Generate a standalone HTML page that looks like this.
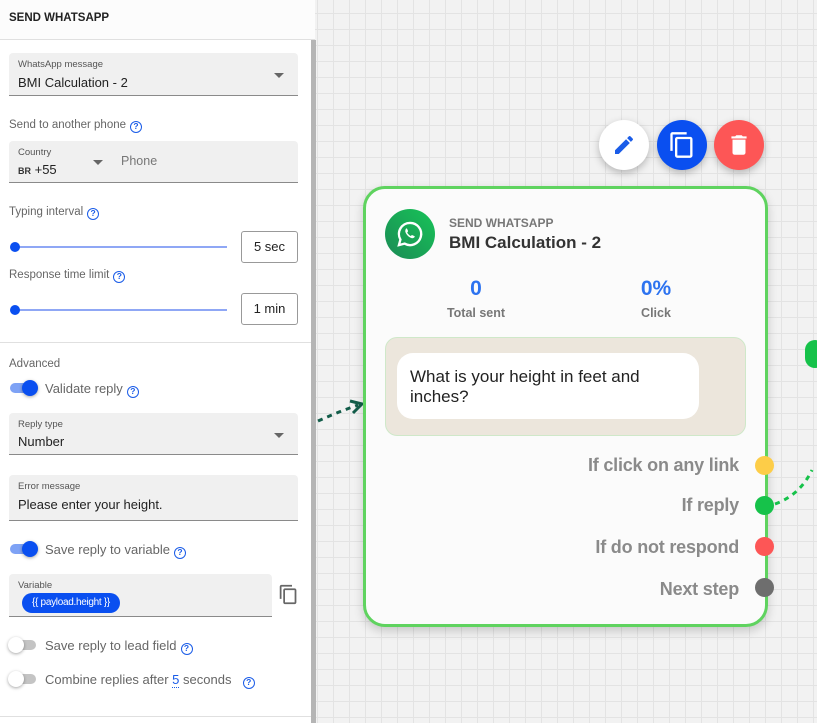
<!DOCTYPE html>
<html><head><style>
*{box-sizing:border-box;margin:0;padding:0}
body{width:817px;height:723px;overflow:hidden;font-family:"Liberation Sans",sans-serif;background:#f2f2f2;position:relative;color:#222}
.canvas{position:absolute;left:315px;top:0;right:0;bottom:0;background-color:#f2f2f2;background-image:linear-gradient(#e3e3e3 1px,transparent 1px),linear-gradient(90deg,#e3e3e3 1px,transparent 1px);background-size:16px 16px;background-position:2px 13px}
.side{position:absolute;left:0;top:0;width:315px;height:723px;background:#fff}
.hdr{height:40px;border-bottom:1px solid #e0e0e0;background:#fcfcfc;padding:12px 9px;font-size:11.5px;font-weight:bold;color:#222}
.sb{position:absolute;left:311px;top:40px;width:5px;height:683px;background:#b5b5b5}
.fld{position:absolute;left:9px;width:289px;background:#f0f0f0;border-bottom:1px solid #8a8a8a;border-radius:4px 4px 0 0}
.fld .l{position:absolute;left:9px;top:6px;font-size:9.5px;color:#555}
.fld .v{position:absolute;left:9px;font-size:13px;color:#222}
.arr{position:absolute;right:14px;width:0;height:0;border-left:5px solid transparent;border-right:5px solid transparent;border-top:5px solid #666}
.lbl{position:absolute;left:9px;font-size:11.5px;color:#666}
.q{display:inline-block;width:12px;height:12px;border:1.5px solid #1a5ce8;border-radius:50%;font-size:8.5px;color:#1a5ce8;text-align:center;line-height:9.5px;font-weight:bold;vertical-align:-1px;margin-left:4px}
.sl{position:absolute;left:15px;width:212px;height:2px;background:#8fa7f5}
.dot{position:absolute;left:-5px;top:-4px;width:10px;height:10px;border-radius:50%;background:#0a4ff0}
.box{position:absolute;left:241px;width:57px;height:32px;border:1px solid #999;border-radius:3px;font-size:13px;text-align:center;line-height:30px;color:#222}
.hr{position:absolute;left:0;width:311px;height:1px;background:#e0e0e0}
.tg{position:absolute;left:10px;width:26px;height:10px;border-radius:5px}
.tg.on{background:#7ea2f5}.tg.off{background:#c4c4c4}
.tg i{position:absolute;top:-3px;width:16px;height:16px;border-radius:50%;box-shadow:0 1px 3px rgba(0,0,0,.35)}
.tg.on i{right:-2px;background:#0a4ff0}.tg.off i{left:-2px;background:#fff}
.tl{position:absolute;left:45px;font-size:13px;color:#666}
.node{position:absolute;left:363px;top:186px;width:405px;height:441px;border:3px solid #5fd35f;border-radius:22px;background:#fbfbfb;box-shadow:0 4px 10px rgba(0,0,0,.18)}
.fab{position:absolute;top:120px;width:50px;height:50px;border-radius:50%;box-shadow:0 3px 8px rgba(0,0,0,.25)}
.out{position:absolute;font-size:18px;color:#8a8a8a;text-align:right;font-weight:bold;letter-spacing:-.2px}
.od{position:absolute;left:755px;width:19px;height:19px;border-radius:50%}
</style></head><body>
<div class="canvas"></div>
<svg style="position:absolute;left:0;top:0" width="817" height="723">
<path d="M318 421 Q338 412 358 405" stroke="#135d4a" stroke-width="3" fill="none" stroke-dasharray="5 5"/>
<path d="M350 401 L362 404 L353 413" stroke="#135d4a" stroke-width="3" fill="none"/>
<path d="M775 504 Q800 495 812 470" stroke="#16c24a" stroke-width="3" fill="none" stroke-dasharray="5 5"/>
</svg>
<div style="position:absolute;left:805px;top:340px;width:20px;height:28px;border-radius:10px;background:#16c24a"></div>
<div class="side">
<div class="hdr">SEND WHATSAPP</div>
<div class="fld" style="top:53px;height:43px"><div class="l">WhatsApp message</div><div class="v" style="top:22px">BMI Calculation - 2</div><div class="arr" style="top:20px"></div></div>
<div class="lbl" style="top:119px">Send to another phone<span class="q">?</span></div>
<div class="fld" style="top:141px;height:42px"><div class="l">Country</div><div class="v" style="top:21px"><span style="font-size:9px;font-weight:bold;color:#333">BR</span> +55</div><div class="arr" style="top:19px;left:84px"></div><div class="v" style="top:13px;left:112px;color:#777;font-size:12.5px">Phone</div></div>
<div class="lbl" style="top:206px">Typing interval<span class="q">?</span></div>
<div class="sl" style="top:246px"><div class="dot"></div></div>
<div class="box" style="top:231px">5 sec</div>
<div class="lbl" style="top:269px">Response time limit<span class="q">?</span></div>
<div class="sl" style="top:309px"><div class="dot"></div></div>
<div class="box" style="top:293px">1 min</div>
<div class="hr" style="top:342px"></div>
<div class="lbl" style="top:358px">Advanced</div>
<div class="tg on" style="top:383px"><i></i></div><div class="tl" style="top:381px">Validate reply<span class="q">?</span></div>
<div class="fld" style="top:413px;height:42px"><div class="l">Reply type</div><div class="v" style="top:21px">Number</div><div class="arr" style="top:20px"></div></div>
<div class="fld" style="top:475px;height:46px"><div class="l">Error message</div><div class="v" style="top:22px">Please enter your height.</div></div>
<div class="tg on" style="top:544px"><i></i></div><div class="tl" style="top:542px">Save reply to variable<span class="q">?</span></div>
<div class="fld" style="top:574px;width:263px;height:43px"><div class="l">Variable</div><div style="position:absolute;left:13px;top:19px;height:20px;padding:0 10px;border-radius:10px;background:#0a4ff0;color:#fff;font-size:10px;line-height:20px;letter-spacing:-.3px">{{ payload.height }}</div></div>
<svg style="position:absolute;left:278px;top:584px" width="21" height="21" viewBox="0 0 24 24"><path d="M16 1H4c-1.1 0-2 .9-2 2v14h2V3h12V1zm3 4H8c-1.1 0-2 .9-2 2v14c0 1.1.9 2 2 2h11c1.1 0 2-.9 2-2V7c0-1.1-.9-2-2-2zm0 16H8V7h11v14z" fill="#666"/></svg>
<div class="tg off" style="top:640px"><i></i></div><div class="tl" style="top:638px">Save reply to lead field<span class="q">?</span></div>
<div class="tg off" style="top:674px"><i></i></div><div class="tl" style="top:672px">Combine replies after <span style="color:#1a5ce8;border-bottom:1px dotted #1a5ce8">5</span> seconds &nbsp;<span class="q">?</span></div>
<div class="hr" style="top:716px"></div>
</div>
<div class="sb"></div>
<div class="fab" style="left:599px;background:#fff"><svg style="margin:13px" width="24" height="24" viewBox="0 0 24 24"><path d="M3 17.25V21h3.75L17.81 9.94l-3.75-3.75L3 17.25zM20.71 7.04a1 1 0 0 0 0-1.41l-2.34-2.34a1 1 0 0 0-1.41 0l-1.83 1.83 3.75 3.75 1.83-1.83z" fill="#1a5ce8"/></svg></div>
<div class="fab" style="left:657px;background:#0a4ff0"><svg style="margin:11px" width="28" height="28" viewBox="0 0 24 24"><path d="M16 1H4c-1.1 0-2 .9-2 2v14h2V3h12V1zm3 4H8c-1.1 0-2 .9-2 2v14c0 1.1.9 2 2 2h11c1.1 0 2-.9 2-2V7c0-1.1-.9-2-2-2zm0 16H8V7h11v14z" fill="#fff"/></svg></div>
<div class="fab" style="left:714px;background:#fd5656"><svg style="margin:12px" width="26" height="26" viewBox="0 0 24 24"><path d="M6 19c0 1.1.9 2 2 2h8c1.1 0 2-.9 2-2V7H6v12zM19 4h-3.5l-1-1h-5l-1 1H5v2h14V4z" fill="#fff"/></svg></div>
<div class="node">
<div style="position:absolute;left:19px;top:20px;width:50px;height:50px;border-radius:50%;background:linear-gradient(45deg,#1a8a55,#18c458)"><svg style="margin:11px" width="28" height="28" viewBox="0 0 24 24"><path d="M12 2.5a9.5 9.5 0 0 0-8.2 14.3L2.5 21.5l4.8-1.3A9.5 9.5 0 1 0 12 2.5z" fill="none" stroke="#fff" stroke-width="2"/><path d="M8.5 7.5c.3-.4.8-.4 1 0l.8 1.8c.1.3 0 .6-.2.8l-.5.6c.6 1.3 1.7 2.4 3 3l.6-.5c.2-.2.5-.3.8-.2l1.8.8c.4.2.4.7 0 1-.8.8-1.8 1-2.8.6-2.3-.9-4-2.7-4.9-5-.4-1 0-2 .4-2.9z" fill="#fff"/></svg></div>
<div style="position:absolute;left:83px;top:27px;font-size:12px;color:#777;font-weight:bold">SEND WHATSAPP</div>
<div style="position:absolute;left:83px;top:44px;font-size:17px;color:#333;font-weight:bold">BMI Calculation - 2</div>
<div style="position:absolute;left:60px;top:88px;width:100px;text-align:center;color:#2d73f0;font-size:21px;font-weight:bold">0</div>
<div style="position:absolute;left:60px;top:117px;width:100px;text-align:center;color:#777;font-size:12.5px;font-weight:bold">Total sent</div>
<div style="position:absolute;left:240px;top:88px;width:100px;text-align:center;color:#2d73f0;font-size:21px;font-weight:bold">0%</div>
<div style="position:absolute;left:240px;top:117px;width:100px;text-align:center;color:#777;font-size:12.5px;font-weight:bold">Click</div>
<div style="position:absolute;left:19px;top:148px;width:361px;height:99px;border-radius:12px;background:#ece6dc;border:1px solid #cfe8c9">
<div style="position:absolute;left:11px;top:15px;width:302px;height:66px;border-radius:16px;background:#fff;padding:14px 13px;font-size:17px;line-height:20px;color:#222">What is your height in feet and inches?</div>
</div>
</div>
<div class="out" style="top:455px;right:78px">If click on any link</div>
<div class="out" style="top:495px;right:78px">If reply</div>
<div class="out" style="top:537px;right:78px">If do not respond</div>
<div class="out" style="top:579px;right:78px">Next step</div>
<div class="od" style="top:456px;background:#fdcd48"></div>
<div class="od" style="top:496px;background:#16c24a"></div>
<div class="od" style="top:537px;background:#fd5656"></div>
<div class="od" style="top:578px;background:#6e6e6e"></div>
</body></html>
